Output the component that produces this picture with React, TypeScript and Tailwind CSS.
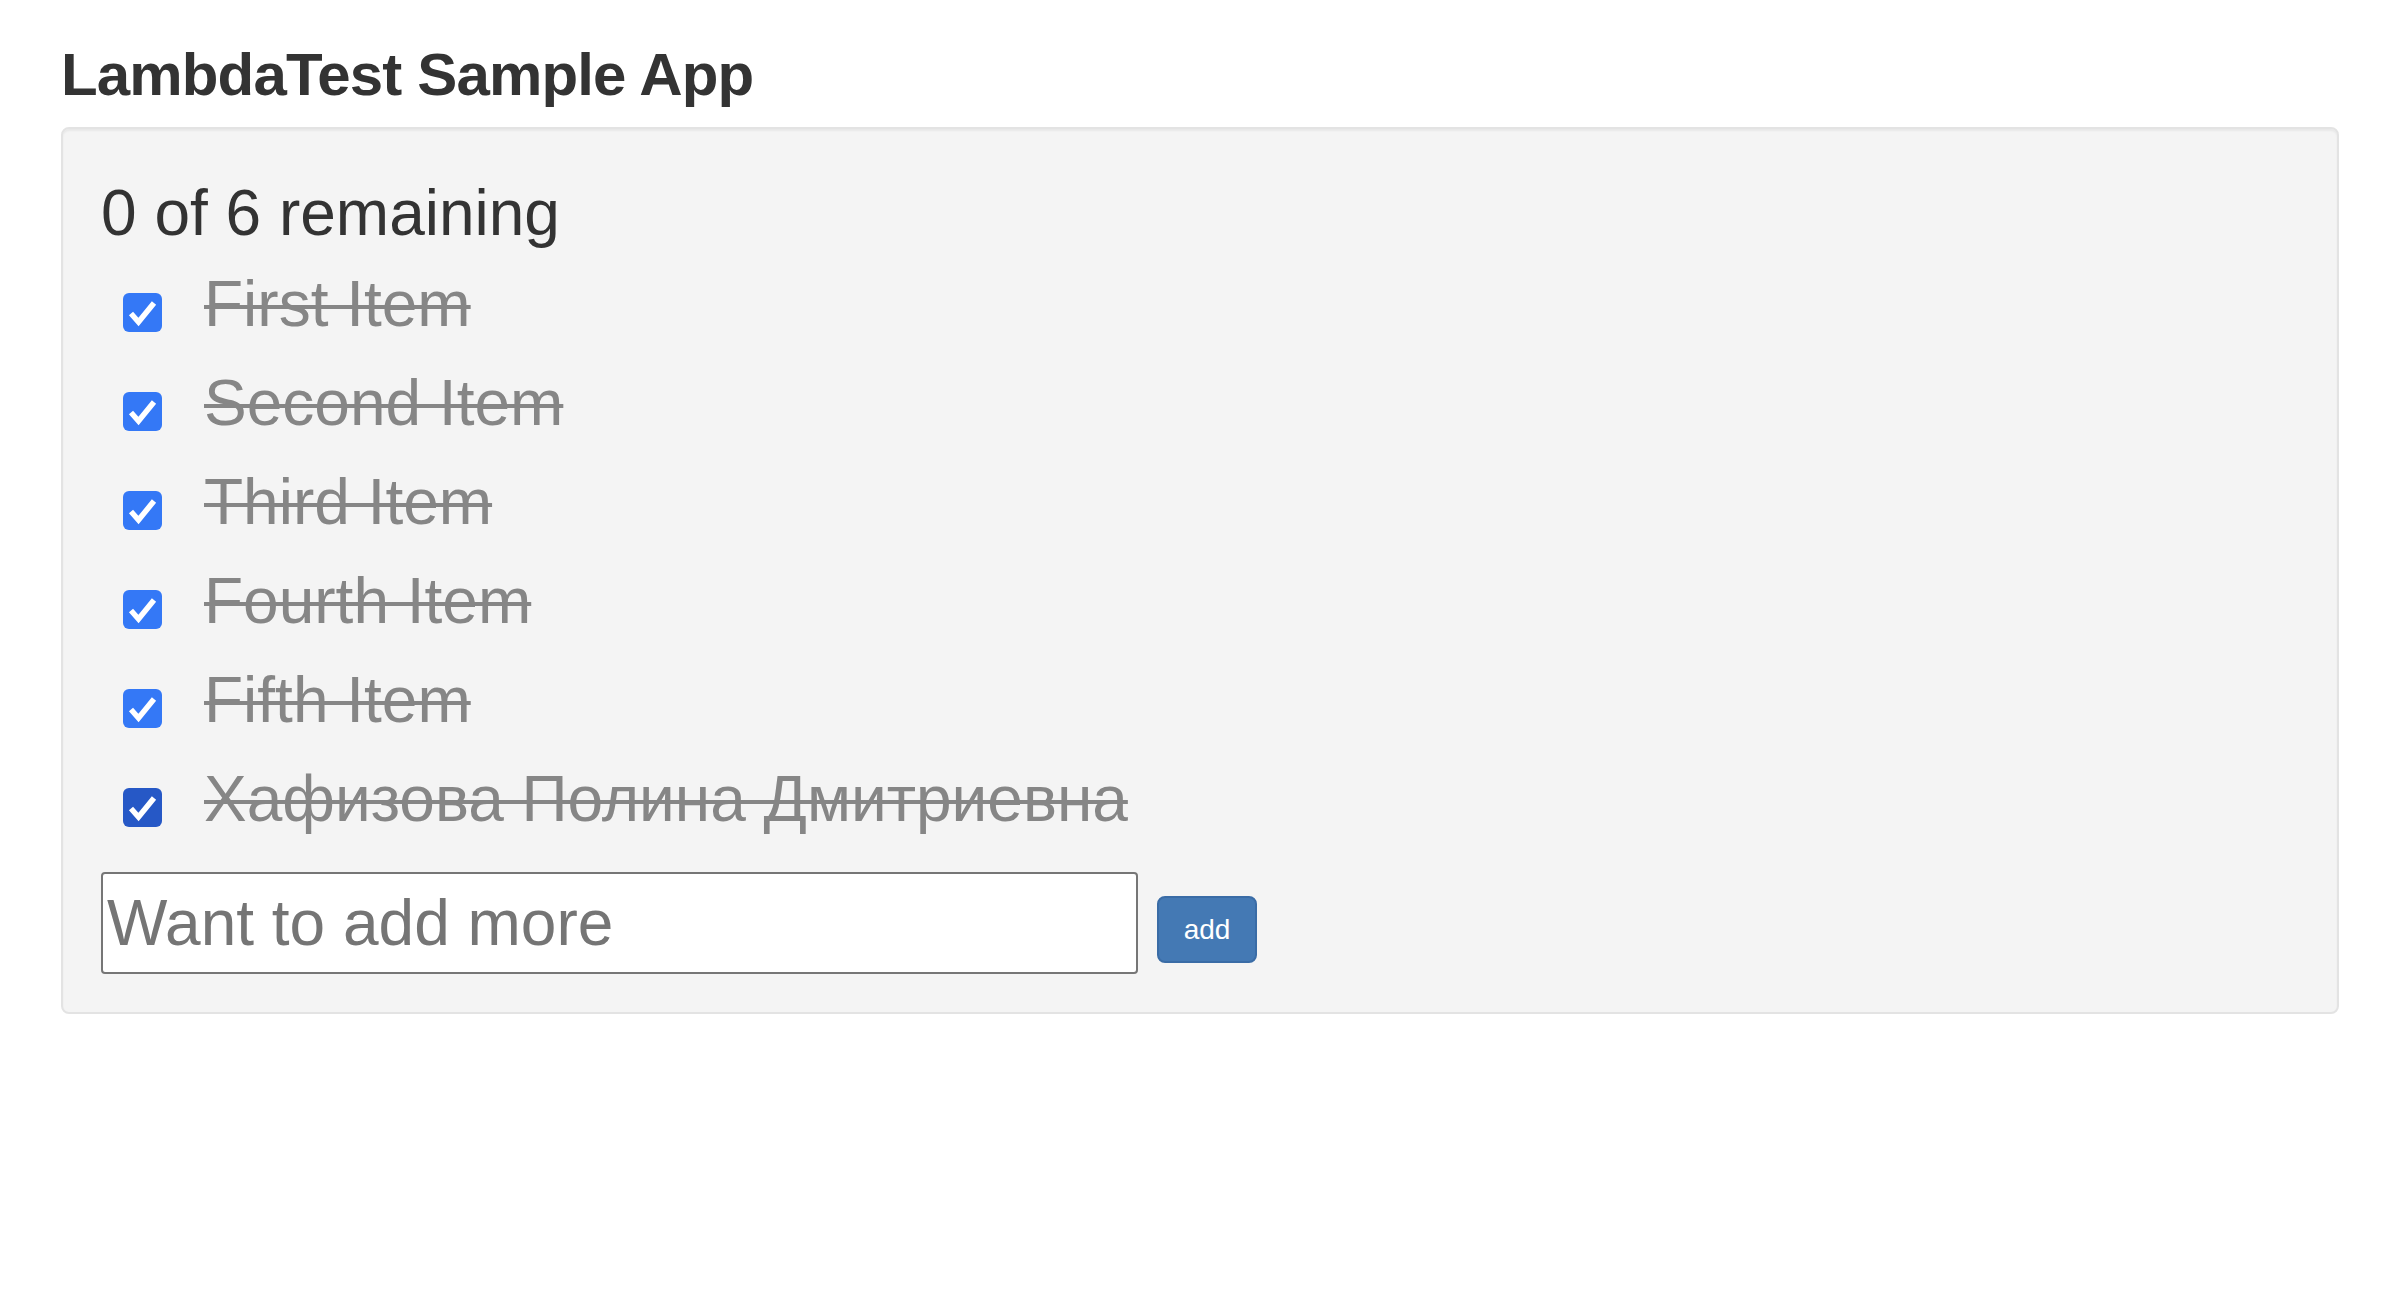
import { useState } from "react";

type Todo = { id: number; text: string; done: boolean };

const INITIAL: Todo[] = [
  { id: 1, text: "First Item", done: true },
  { id: 2, text: "Second Item", done: true },
  { id: 3, text: "Third Item", done: true },
  { id: 4, text: "Fourth Item", done: true },
  { id: 5, text: "Fifth Item", done: true },
  { id: 6, text: "Хафизова Полина Дмитриевна", done: true },
];

function CheckBox({ checked, focused }: { checked: boolean; focused?: boolean }) {
  return (
    <span
      className={`mt-[38px] flex h-[39px] w-[39px] shrink-0 items-center justify-center rounded-[6px] ${
        checked ? (focused ? "bg-[#2658c6]" : "bg-[#3478f6]") : "border-2 border-[#767676] bg-white"
      }`}
    >
      {checked && (
        <svg viewBox="0 0 39 39" className="h-[39px] w-[39px]">
          <path d="M8 20.5 L15.5 29 L31 10" fill="none" stroke="white" strokeWidth="5.5" />
        </svg>
      )}
    </span>
  );
}

export default function App() {
  const [todos, setTodos] = useState<Todo[]>(INITIAL);
  const [draft, setDraft] = useState("");

  const remaining = todos.filter((t) => !t.done).length;

  const toggle = (id: number) =>
    setTodos((list) => list.map((t) => (t.id === id ? { ...t, done: !t.done } : t)));

  const add = () => {
    if (!draft.trim()) return;
    setTodos((list) => [...list, { id: Date.now(), text: draft, done: false }]);
    setDraft("");
  };

  return (
    <div className="min-h-[1296px] bg-white px-[61px] pt-[42px] font-['Liberation_Sans',Arial,sans-serif] text-[#333]">
      <h2 className="text-[60px] font-bold leading-[66px] tracking-[-0.85px]">LambdaTest Sample App</h2>

      {/* well */}
      <div className="mt-[19px] rounded-[8px] border-2 border-[#e3e3e3] bg-[#f4f4f4] px-[38px] pt-[49px] pb-[38px] shadow-[inset_0_2px_2px_rgba(0,0,0,0.05)]">
        <h3 className="text-[64px] leading-[70px]">
          {remaining} of {todos.length} remaining
        </h3>

        <ul className="mt-[7px] pl-[22px]">
          {todos.map((t, i) => (
            <li
              key={t.id}
              className="flex h-[99px] cursor-pointer items-start"
              onClick={() => toggle(t.id)}
            >
              <CheckBox checked={t.done} focused={i === todos.length - 1} />
              <span
                className={`ml-[42px] text-[64px] leading-[99px] ${
                  t.done ? "text-[#868686] line-through decoration-[4px]" : "text-[#333]"
                }`}
              >
                {t.text}
              </span>
            </li>
          ))}
        </ul>

        <div className="mt-[23px] flex items-start">
          <input
            value={draft}
            onChange={(e) => setDraft(e.target.value)}
            placeholder="Want to add more"
            className="h-[102px] w-[1037px] rounded-[4px] border-2 border-[#767676] bg-white px-[4px] text-[64px] text-[#333] outline-none placeholder:text-[#757575]"
          />
          <button
            onClick={add}
            className="ml-[19px] mt-[24px] h-[67px] w-[100px] rounded-[8px] border-2 border-[#3a6ca6] bg-[#4479b4] text-[28px] leading-none text-white"
          >
            add
          </button>
        </div>
      </div>
    </div>
  );
}
